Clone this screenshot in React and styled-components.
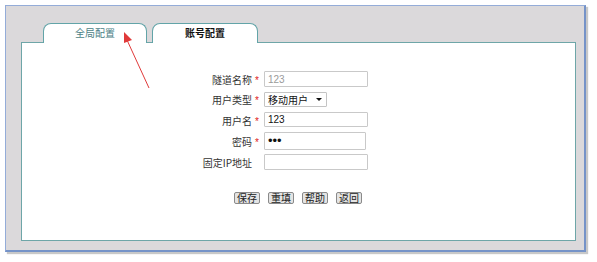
import React from 'react';
import styled, { createGlobalStyle } from 'styled-components';

const Global = createGlobalStyle`
  html, body { margin: 0; padding: 0; background: #ffffff; }
  body { font-family: "Noto Sans CJK SC", "Liberation Sans", sans-serif; }
`;

const Page = styled.div`
  position: relative;
  width: 597px;
  height: 262px;
  padding: 5px 0 0 5px;
  box-sizing: border-box;
`;

const Frame = styled.div`
  width: 581px;
  height: 247px;
  box-sizing: border-box;
  background: #dbd9db;
  border: 1px solid #94acd8;
  border-right: 2px solid #7593c8;
  border-bottom: 2px solid #7593c8;
  box-shadow: 2px 2px 1px #c8c8c8;
  padding: 17px 8px 9px 15px;
  display: flex;
  flex-direction: column;
`;

const Tabs = styled.div`
  display: flex;
  gap: 5px;
  margin-left: 22px;
  height: 19px;
  position: relative;
  z-index: 1;
`;

const Tab = styled.div`
  width: ${p => p.$w}px;
  height: 20px;
  box-sizing: border-box;
  background: #ffffff;
  border: 1px solid #62a4a8;
  border-bottom: none;
  border-radius: 8px 8px 0 0;
  font-size: 10px;
  line-height: 18px;
  text-align: center;
  color: ${p => (p.$active ? '#111' : '#4d7f86')};
  font-weight: ${p => (p.$active ? 700 : 400)};
`;

const Panel = styled.div`
  flex: 1;
  background: #ffffff;
  border: 1px solid #6ea6a8;
  padding-top: 26px;
  box-sizing: border-box;
`;

const Form = styled.div`
  display: grid;
  grid-template-columns: 230px 12px auto;
  grid-template-rows: 20px 20px 21px 21px 22px;
  align-items: center;
`;

const Label = styled.div`
  text-align: right;
  font-size: 10px;
  line-height: 12px;
  color: #333;
  white-space: nowrap;
  padding-top: 2px;
`;

const Star = styled.div`
  color: #e02020;
  font-family: "Liberation Sans", sans-serif;
  font-size: 10px;
  line-height: 10px;
  padding: 4px 0 0 3px;
`;

const Cell = styled.div`
  display: flex;
  align-items: center;
`;

const Field = styled.input`
  width: ${p => p.$w || 104}px;
  height: ${p => p.$h || 16}px;
  box-sizing: border-box;
  border: 1px solid #c9c9c9;
  border-radius: 1px;
  padding: 0 3px;
  margin: 0;
  font-family: "Liberation Sans", sans-serif;
  font-size: ${p => (p.type === 'password' ? '13px' : '10px')};
  letter-spacing: 0;
  color: ${p => (p.$muted ? '#9a9a9a' : '#111')};
  background: #fff;
  outline: none;
`;

const Select = styled.div`
  width: 63px;
  height: 15px;
  box-sizing: border-box;
  border: 1px solid #c4c4c4;
  border-radius: 1px;
  display: flex;
  align-items: center;
  justify-content: space-between;
  padding: 0 4px 0 3px;
  font-size: 10px;
  color: #111;
`;

const Caret = styled.span`
  width: 0;
  height: 0;
  border-left: 3px solid transparent;
  border-right: 3px solid transparent;
  border-top: 3px solid #111;
`;

const Buttons = styled.div`
  display: flex;
  gap: 8px;
  margin: 19px 0 0 212px;
`;

const Button = styled.button`
  height: 12px;
  box-sizing: border-box;
  padding: 0 2px;
  margin: 0;
  border: 1px solid #8a8a8a;
  border-radius: 2px;
  background: #e4e4e4;
  font-family: "Noto Sans CJK SC", sans-serif;
  font-size: 10px;
  line-height: 10px;
  color: #222;
`;

const Overlay = styled.svg`
  position: absolute;
  left: 0;
  top: 0;
  z-index: 5;
  pointer-events: none;
`;

export default function App() {
  return (
    <Page>
      <Global />
      <Frame>
        <Tabs>
          <Tab $w={104}>全局配置</Tab>
          <Tab $w={106} $active>账号配置</Tab>
        </Tabs>
        <Panel>
          <Form>
            <Label>隧道名称</Label>
            <Star>*</Star>
            <Cell><Field readOnly defaultValue="123" $muted /></Cell>

            <Label>用户类型</Label>
            <Star>*</Star>
            <Cell><Select>移动用户<Caret /></Select></Cell>

            <Label>用户名</Label>
            <Star>*</Star>
            <Cell><Field readOnly defaultValue="123" $h={15} /></Cell>

            <Label>密码</Label>
            <Star>*</Star>
            <Cell><Field type="password" readOnly defaultValue="123" $w={102} $h={18} /></Cell>

            <Label>固定IP地址</Label>
            <Star />
            <Cell><Field readOnly defaultValue="" /></Cell>
          </Form>
          <Buttons>
            <Button>保存</Button>
            <Button>重填</Button>
            <Button>帮助</Button>
            <Button>返回</Button>
          </Buttons>
        </Panel>
      </Frame>
      <Overlay width="597" height="262" viewBox="0 0 597 262">
        <line x1="149" y1="88" x2="127" y2="40" stroke="#e03a3a" strokeWidth="1" />
        <polygon points="124,32 132,40 124,43" fill="#e03a3a" />
      </Overlay>
    </Page>
  );
}
